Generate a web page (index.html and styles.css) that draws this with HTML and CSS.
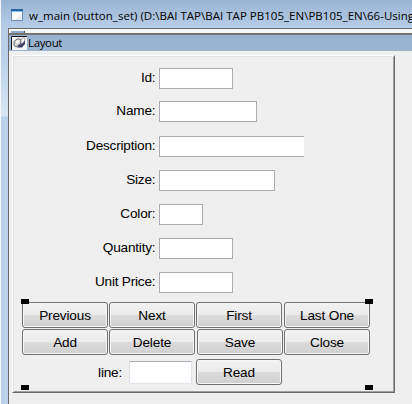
FILE: index.html
```
<!DOCTYPE html>
<html lang="en">
<head>
<meta charset="utf-8">
<title>w_main</title>
<link rel="stylesheet" href="styles.css">
</head>
<body>
<div class="window">
  <header class="titlebar">
    <svg class="app-icon" width="12" height="12" viewBox="0 0 12 12"><rect x=".5" y=".5" width="11" height="11" fill="#fff" stroke="#6c8fb5"/><path d="M0 0h12v2H0z" fill="#2464a0"/><path d="M1 2h10v1H1z" fill="#7dbce5"/><path d="M4 11h7V4z" fill="#e8edf1"/></svg>
    <span class="title">w_main (button_set) (D:\BAI TAP\BAI TAP PB105_EN\PB105_EN\66-Using</span>
  </header>
  <main class="frame">
    <div class="strip"><i class="strip-tab"></i></div>
    <div class="layout-bar">
      <svg class="layout-icon" width="16" height="14" viewBox="0 0 16 14"><path d="M0 0h16v14H0z" fill="#f4f4f4"/><path d="M.5 14V.5H16" fill="none" stroke="#111"/><path d="M6 11.500 8 8l3-1 1-3 2-1v5l-3 3.500z" fill="#3f4068"/><path d="M3 9.500V5.500L6 3h3l1 1-.5 4L7 9.500 5 11z" fill="#d4d4d0" stroke="#6e6e70"/><path d="M5 5.500 7 4l1 1-2 3z" fill="#fff"/><path d="m10 4 1.500-2H14v2l-2 3-2 .5z" fill="#fff" stroke="#77777d" stroke-width=".7"/></svg>
      <span class="layout-name">Layout</span>
    </div>
    <section class="panel">
      <div class="field"><label>Id:</label><span class="input w74"></span></div>
      <div class="field name"><label>Name:</label><span class="input w98"></span></div>
      <div class="field description"><label>Description:</label><span class="input w145"></span></div>
      <div class="field"><label>Size:</label><span class="input w116"></span></div>
      <div class="field"><label>Color:</label><span class="input w44"></span></div>
      <div class="field"><label>Quantity:</label><span class="input w74"></span></div>
      <div class="field"><label>Unit Price:</label><span class="input w74"></span></div>
      <div class="button-set">
        <button>Previous</button><button>Next</button><button>First</button><button>Last One</button>
        <button>Add</button><button>Delete</button><button class="save">Save</button><button>Close</button>
        <label class="line-label">line:</label><span class="line-input"></span><button class="read">Read</button>
        <i class="handle tl"></i><i class="handle tr"></i><i class="handle bl"></i><i class="handle br"></i>
      </div>
    </section>
  </main>
</div>
</body>
</html>
```
FILE: styles.css
```
* { box-sizing: border-box; }
body { margin: 0; overflow: hidden; font: 13.6px "Liberation Sans", Arial, sans-serif; letter-spacing: -.2px; color: #000; }
.window {
  width: 412px; height: 404px; padding-left: 7px; overflow: hidden;
  display: flex; flex-direction: column;
  border-left: 1px solid #f4f8fc;
  background: linear-gradient(#98b4d3 0, #b7cee8 28px, #b9d1ea 60px, #d9e6f4 116px, #b9d1ea 117px);
}
.titlebar { height: 28px; flex: none; display: flex; align-items: center; padding: 2px 0 0 3px; }
.app-icon { flex: none; }
.title { margin: 1px 0 0 6px; white-space: nowrap; font: 11.5px/16px "Open Sans", "Noto Sans", sans-serif; letter-spacing: .02px; }
.frame { flex: 1; display: flex; flex-direction: column; border-left: 1px solid #6b6765; background: #efefef; }
.strip { height: 7px; flex: none; border-top: 1px solid #6b6765; border-bottom: 2px solid #77736f; background: #f8f8f8; padding: 2px 0 0 2px; }
.strip-tab { display: block; width: 14px; height: 2px; background: #8faace; border-right: 1px solid #555; }
.layout-bar { height: 16px; flex: none; display: flex; align-items: center; background: #99b4d1; padding-left: 2px; }
.layout-icon { flex: none; }
.layout-name { margin-left: 1px; font: 11.5px/16px "Open Sans", "Noto Sans", sans-serif; letter-spacing: -.35px; }
.panel {
  width: 383px; height: 338px; margin: 4px 0 0 3px; padding-top: 12px;
  border: 1px solid; border-color: #fff #696969 #696969 #fff;
  box-shadow: inset 1px 1px #e3e3e3, inset -1px -1px #a0a0a0;
}
.field { height: 34px; display: flex; }
.field.name { height: 35px; }
.field:first-child { height: 33px; }
.field label { width: 143px; padding: 2px .6px 0 0; text-align: right; line-height: 16px; }
.input { height: 21px; margin-left: 3px; background: #fff; border: 1px solid #abadb3; }
.w44 { width: 44px; }
.w74 { width: 74px; }
.w98 { width: 98px; }
.w116 { width: 116px; }
.w145 { width: 145px; border-right: 0; }
.button-set {
  position: relative; width: 348px; margin: -4px 0 0 9px;
  display: grid; grid-template: 26px 26px 26px / 87px 87px 88px 86px; row-gap: 1px;
}
button {
  width: 86px; margin: 0; padding: 0; font: inherit; letter-spacing: -.15px; color: #000;
  border: 1px solid #707070; border-radius: 3px; box-shadow: inset 0 0 0 1px #f7f7f7;
  background: linear-gradient(#f2f2f2, #ebebeb 49%, #dcdcdc 50%, #cfcfcf);
}
.save { margin-left: 1px; }
.line-label { text-align: right; padding: 9px 0 0; width: 100px; line-height: 16px; }
.line-input { width: 63px; height: 23px; margin: 5px 0 0 20px; background: #fff; border: 1px solid #e2e3ea; border-top-color: #abadb3; border-radius: 1px; }
.read { margin: 3px 0 -3px; }
.handle { position: absolute; width: 8px; height: 5px; background: #000; }
.tl { left: -1px; top: -3px; }
.tr { right: -3px; top: -3px; }
.bl { left: -1px; top: 83px; }
.br { right: -3px; top: 83px; }
```
